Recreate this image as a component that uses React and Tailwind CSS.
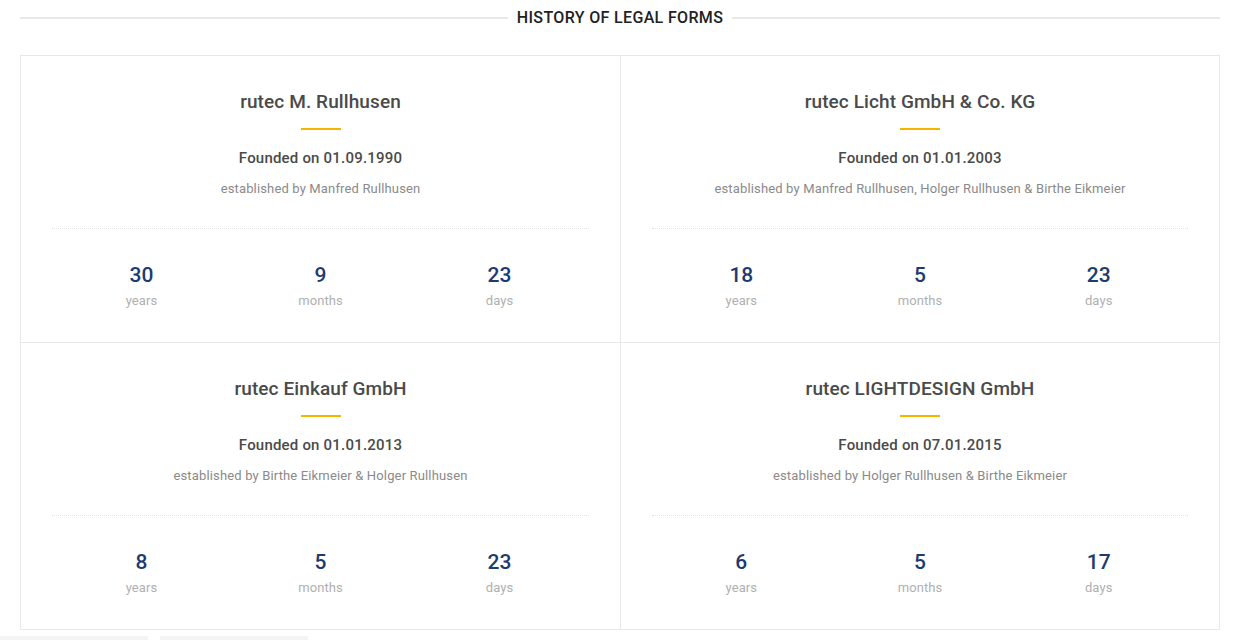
import React from 'react';

// Legal form history cards
const forms = [
  {
    name: 'rutec M. Rullhusen',
    founded: '01.09.1990',
    by: 'Manfred Rullhusen',
    stats: [30, 9, 23]
  },
  {
    name: 'rutec Licht GmbH & Co. KG',
    founded: '01.01.2003',
    by: 'Manfred Rullhusen, Holger Rullhusen & Birthe Eikmeier',
    stats: [18, 5, 23]
  },
  {
    name: 'rutec Einkauf GmbH',
    founded: '01.01.2013',
    by: 'Birthe Eikmeier & Holger Rullhusen',
    stats: [8, 5, 23]
  },
  {
    name: 'rutec LIGHTDESIGN GmbH',
    founded: '07.01.2015',
    by: 'Holger Rullhusen & Birthe Eikmeier',
    stats: [6, 5, 17]
  }
];

const units = ['years', 'months', 'days'];

const FormCard = ({ form, idx }) => (
  <div
    className={`px-[31px] pt-[33px] border-[#e8e8e8] ${
      idx % 2 === 0 ? 'border-r' : ''
    } ${idx < 2 ? 'border-b h-[287px]' : 'h-[286px]'}`}
  >
    <div className="flex flex-col items-center">
      <h3 className="text-[19px] leading-[26px] text-[#4a4a4a] font-medium tracking-[0.1px]">
        {form.name}
      </h3>
      <div className="w-10 h-[2px] bg-[#f5b400] mt-[13px]" />
      <p className="mt-[18px] text-[15px] leading-[20px] text-[#4a4a4a] font-medium tracking-[0.2px]">
        Founded on {form.founded}
      </p>
      <p className="mt-[12px] text-[13px] leading-[18px] text-[#8a8a8a] tracking-[0.15px]">
        established by {form.by}
      </p>
    </div>
    <div className="mt-[30px] border-t border-dotted border-[#e2e2e2]" />
    <div className="grid grid-cols-3 mt-[34px]">
      {form.stats.map((n, i) => (
        <div key={i} className="flex flex-col items-center">
          <span className="text-[21px] leading-[24px] font-medium text-[#1d3b6f]">{n}</span>
          <span className="mt-[5px] text-[13px] leading-[18px] text-[#b0b0b0] tracking-[0.1px]">
            {units[i]}
          </span>
        </div>
      ))}
    </div>
  </div>
);

const App = () => {
  return (
    <div className="w-[1245px] h-[640px] bg-white overflow-hidden font-['Roboto','Liberation_Sans',sans-serif]">
      <div className="ml-5 w-[1200px]">
        {/* Section heading */}
        <div className="flex items-center h-[35px]">
          <div className="flex-1 h-[2px] bg-[#e8e8e8]" />
          <h2 className="px-[9px] text-[16px] leading-[20px] font-medium text-[#222] tracking-[0.35px]">
            HISTORY OF LEGAL FORMS
          </h2>
          <div className="flex-1 h-[2px] bg-[#e8e8e8]" />
        </div>

        {/* Cards grid */}
        <div className="mt-5 grid grid-cols-[600px_1fr] border border-[#e8e8e8]">
          {forms.map((form, idx) => (
            <FormCard key={idx} form={form} idx={idx} />
          ))}
        </div>
      </div>

      {/* faint tabs below */}
      <div className="flex gap-3 mt-[6px]">
        <div className="w-[148px] h-[4px] bg-[#f4f4f4]" />
        <div className="w-[148px] h-[4px] bg-[#f4f4f4]" />
      </div>
    </div>
  );
};

export default App;
